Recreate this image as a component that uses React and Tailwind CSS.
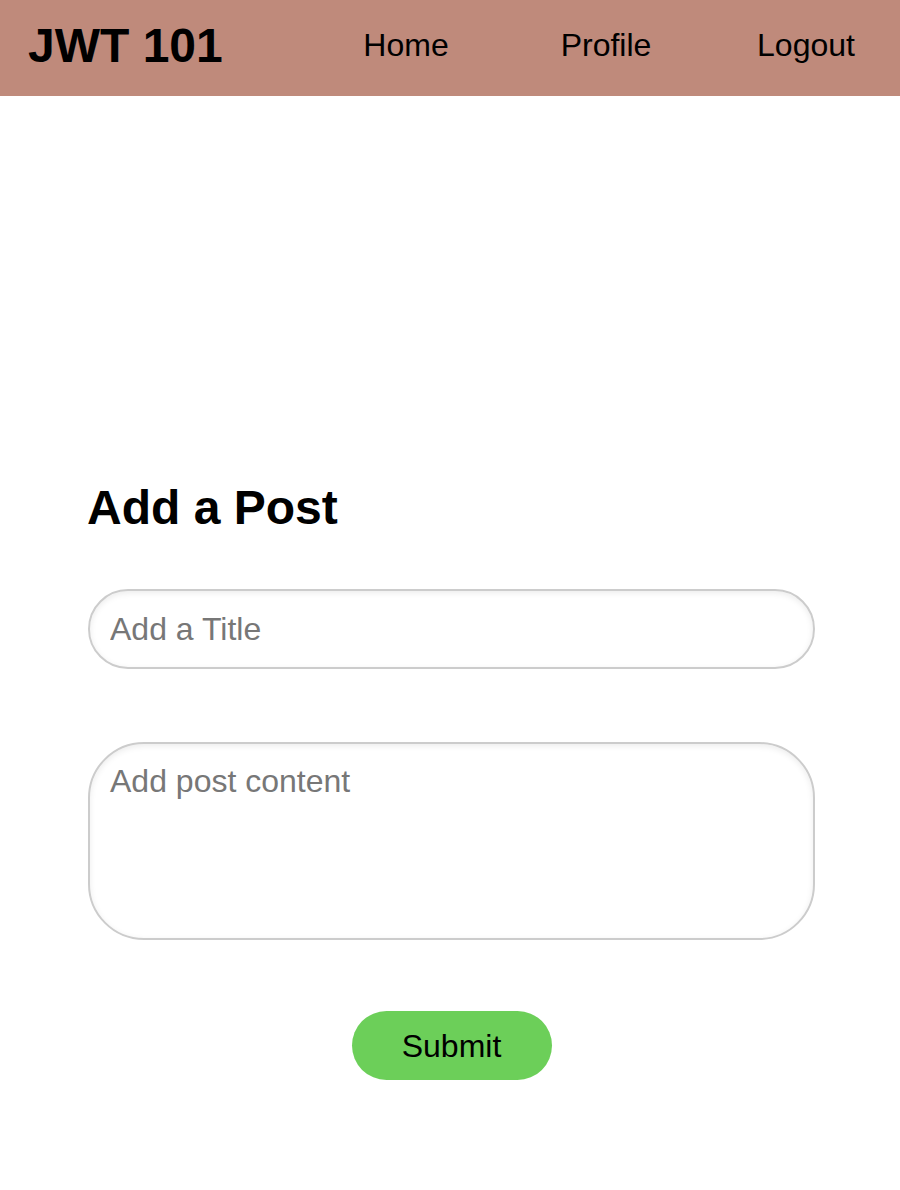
const navLinks = ["Home", "Profile", "Logout"];

function Header() {
  return (
    <header className="flex h-[96px] items-center bg-[#bf8a7b] pl-[28px]">
      <h1 className="mb-[4px] text-[48px] font-bold leading-[56px] text-black">JWT 101</h1>
      <nav className="-mr-[6px] mb-[5px] ml-auto flex">
        {navLinks.map((link) => (
          <a key={link} href="#" className="block w-[200px] text-center text-[32px] leading-[37px] text-black">
            {link}
          </a>
        ))}
      </nav>
    </header>
  );
}

function PostForm() {
  return (
    <form className="mx-[88px] mt-[384px] flex w-[727px] flex-col" onSubmit={(event) => event.preventDefault()}>
      <h2 className="-ml-px text-[48px] font-bold leading-[56px] text-black">Add a Post</h2>
      <input
        type="text"
        placeholder="Add a Title"
        className="mt-[53px] h-[80px] w-full rounded-full border-2 border-[#cccccc] px-[20px] text-[32px] shadow-[inset_0_2px_6px_rgba(0,0,0,0.08)] outline-none placeholder:text-[#777777]"
      />
      <textarea
        placeholder="Add post content"
        className="mt-[73px] h-[198px] w-full resize-none rounded-[56px] border-2 border-[#cccccc] px-[20px] pt-[19px] text-[32px] leading-[37px] shadow-[inset_0_2px_6px_rgba(0,0,0,0.08)] outline-none placeholder:text-[#777777]"
      />
      <button
        type="submit"
        className="mx-auto mt-[71px] h-[69px] w-[200px] rounded-full bg-[#6ccf59] text-[32px] text-black"
      >
        Submit
      </button>
    </form>
  );
}

export default function App() {
  return (
    <div className="min-h-[1190px] bg-white font-['Liberation_Sans',Arial,sans-serif]">
      <Header />
      <PostForm />
    </div>
  );
}
